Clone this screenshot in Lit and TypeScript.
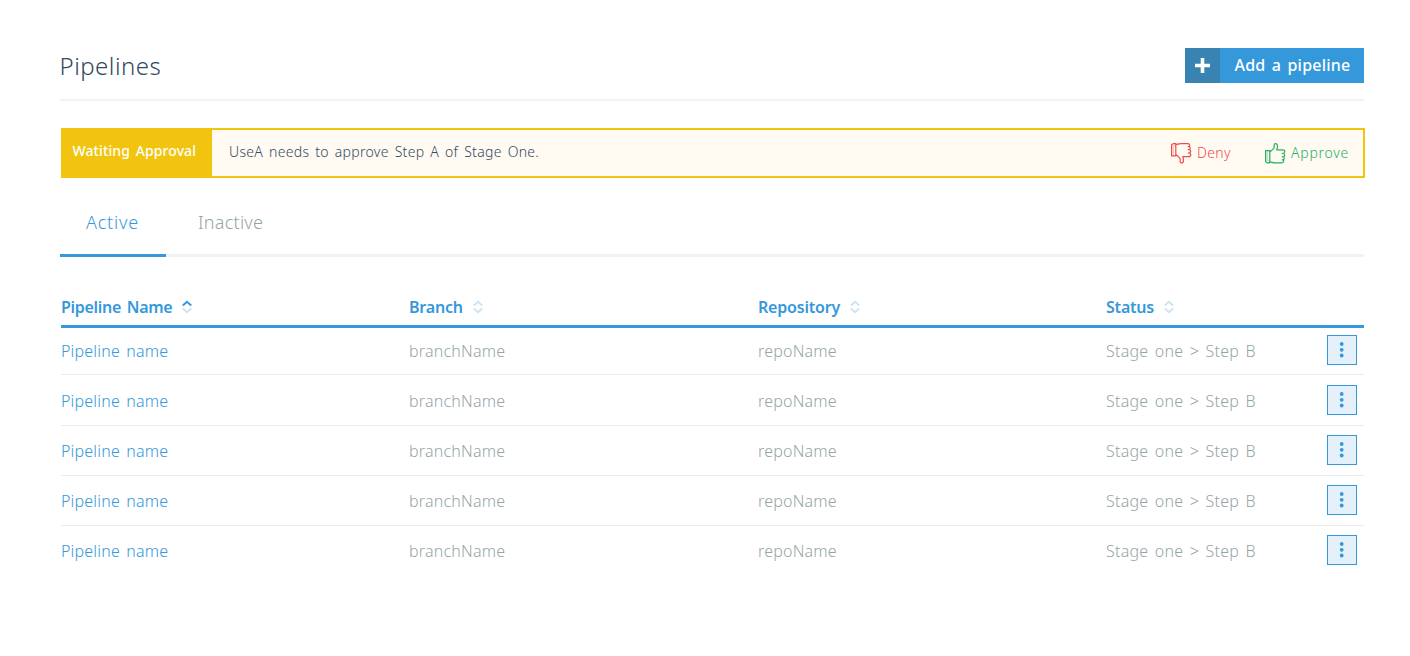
import { LitElement, html, css, svg } from "lit";
import { customElement } from "lit/decorators.js";

const chevrons = (cls: string) => html`<svg class="sort ${cls}" width="10" height="14" viewBox="0 0 10 14" fill="none" stroke="#3498db" stroke-width="2">
  <path class="up" d="M.8 5.500 5 1.800 9.200 5.500" /><path class="down" d="M.8 8.500 5 12.200 9.200 8.500" /></svg>`;

const thumb = svg`<path d="M.6 7.600h4.200v12.200H2.200L.6 18.600z M4.800 9 7.600 6.600 9.100 4.800V2.100C9.100 1.100 9.700.6 10.500.6c1.400 0 2 1.400 2 3 0 1.200-.4 2.300-.8 3.300h5.800c1.500 0 2.300.8 2.300 1.700s-.6 1.800-1.900 1.900h-1.200 M17.900 10.500c1.300.1 1.800.9 1.800 1.700s-.6 1.600-1.900 1.700h-1 M17.800 13.900c1.100.1 1.500.8 1.500 1.500s-.6 1.400-1.600 1.500h-1 M17.700 16.900c.8.1 1.100.6 1 1.300-.1.900-.8 1.600-1.800 1.600H9.600c-1.800 0-2.800-.7-4.800-1" /><path d="M2.300 8v9.300l2.300.9" stroke-width=".4" />`;

interface Pipeline { name: string; branch: string; repo: string; status: string; }

const pipelines: Pipeline[] = Array.from({ length: 5 }, () => ({
  name: "Pipeline name", branch: "branchName", repo: "repoName", status: "Stage one > Step B",
}));

@customElement("app-root")
export class AppRoot extends LitElement {
  static styles = css`
    :host { display: block; box-sizing: border-box; height: 656px; overflow: hidden; background: #fff; padding: 48px 46px 0 60px; font-family: "Noto Sans", "Open Sans", sans-serif; font-weight: 300; font-size: 16px; color: #34495e; word-spacing: 2px; white-space: nowrap; }
    * { box-sizing: border-box; }
    svg { display: block; flex: none; }
    .head { display: flex; justify-content: space-between; height: 53px; border-bottom: 2px solid #f1f3f7; }
    h1 { margin: 0 0 0 -.5px; font-size: 24px; line-height: 35px; font-weight: 300; letter-spacing: .5px; }
    .add { display: flex; align-items: center; height: 35px; width: 179px; background: #3498db; color: #fff; font-weight: 500; letter-spacing: .2px; }
    .add span { padding-bottom: 2px; }
    .plus { width: 35px; height: 35px; padding: 10px; background: #3983b2; margin-right: 14.5px; }
    .alert { display: flex; align-items: center; margin: 27px 0 0 1px; width: 1304px; height: 50px; border: 2px solid #f1c40f; background: #fffbf3; font-size: 14px; }
    .tag { align-self: stretch; width: 149px; padding-left: 9.5px; line-height: 42px; background: #f1c40f; color: #fff; font-weight: 500; letter-spacing: .1px; }
    .msg { padding-left: 17px; flex: 1; line-height: 43px; height: 46px; letter-spacing: .3px; }
    .act { display: flex; align-items: center; }
    .act span { padding-bottom: 2px; }
    .act svg { margin-right: 5px; }
    .deny { color: #eb4d4b; width: 94px; letter-spacing: .3px; }
    .approve { color: #27ae60; width: 98px; letter-spacing: .75px; }
    .tabs { display: flex; height: 79px; margin-left: -.5px; font-size: 18px; color: #95a5a6; border-bottom: 3px solid #eff2f7; }
    .tab { height: 79px; line-height: 88px; padding-left: 32.5px; letter-spacing: .25px; }
    .tab.on { width: 106px; padding-left: 26.5px; color: #3498db; border-bottom: 3px solid #3498db; letter-spacing: .8px; }
    .row { display: grid; grid-template-columns: 348px 349px 348px 221px 30px; align-items: center; height: 50.1px; margin-left: 1px; border-bottom: 1px solid #ebebeb; color: #95a5a6; letter-spacing: .2px; }
    .row span { padding-top: 2px; }
    .row .status { letter-spacing: .25px; }
    .row:last-child { border-color: transparent; }
    .row.th { height: 42px; margin-top: 29px; padding-top: 2px; border-bottom: 3px solid #3498db; color: #3498db; font-weight: 600; margin-bottom: -2.7px; letter-spacing: -.2px; }
    .row.th span { padding: 0; }
    .cell { display: flex; align-items: center; }
    .cell:first-child { letter-spacing: -.3px; }
    .row .name { color: #3498db; }
    .sort { margin: 0 0 0 10px; }
    .sort path { opacity: .25; }
    .sort.asc .up { opacity: 1; }
    .menu { width: 30px; height: 30px; border: 1px solid #3498db; background: #e4f0fa; }
  `;

  render() {
    const head = ["Pipeline Name", "Branch", "Repository", "Status"];
    return html`
      <div class="head">
        <h1>Pipelines</h1>
        <div class="add">
          <svg class="plus" viewBox="0 0 15 15"><path d="M7.500 0v15M0 7.500h15" stroke="#fff" stroke-width="3.600" /></svg>
          <span>Add a pipeline</span>
        </div>
      </div>
      <div class="alert">
        <div class="tag">Watiting Approval</div>
        <div class="msg">UseA needs to approve Step A of Stage One.</div>
        <div class="act deny"><svg width="21" height="21" viewBox="0 0 21 21" fill="none" stroke="currentColor" stroke-width="1.200" stroke-linejoin="round"><g transform="matrix(1 0 0 -1 0 20.500)">${thumb}</g></svg><span>Deny</span></div>
        <div class="act approve"><svg width="21" height="21" viewBox="0 0 21 21" fill="none" stroke="currentColor" stroke-width="1.200" stroke-linejoin="round">${thumb}</svg><span>Approve</span></div>
      </div>
      <div class="tabs"><div class="tab on">Active</div><div class="tab">Inactive</div></div>
      <div class="row th">${head.map((h, i) => html`<div class="cell"><span>${h}</span>${chevrons(i ? "" : "asc")}</div>`)}</div>
      ${pipelines.map(p => html`<div class="row">
        <span class="name">${p.name}</span><span>${p.branch}</span><span>${p.repo}</span><span class="status">${p.status}</span>
        <svg class="menu" viewBox="0 0 28 28" fill="#3498db"><circle cx="13.700" cy="8" r="1.900"/><circle cx="13.700" cy="13.800" r="1.900"/><circle cx="13.700" cy="19.500" r="1.900"/></svg>
      </div>`)}
    `;
  }
}
